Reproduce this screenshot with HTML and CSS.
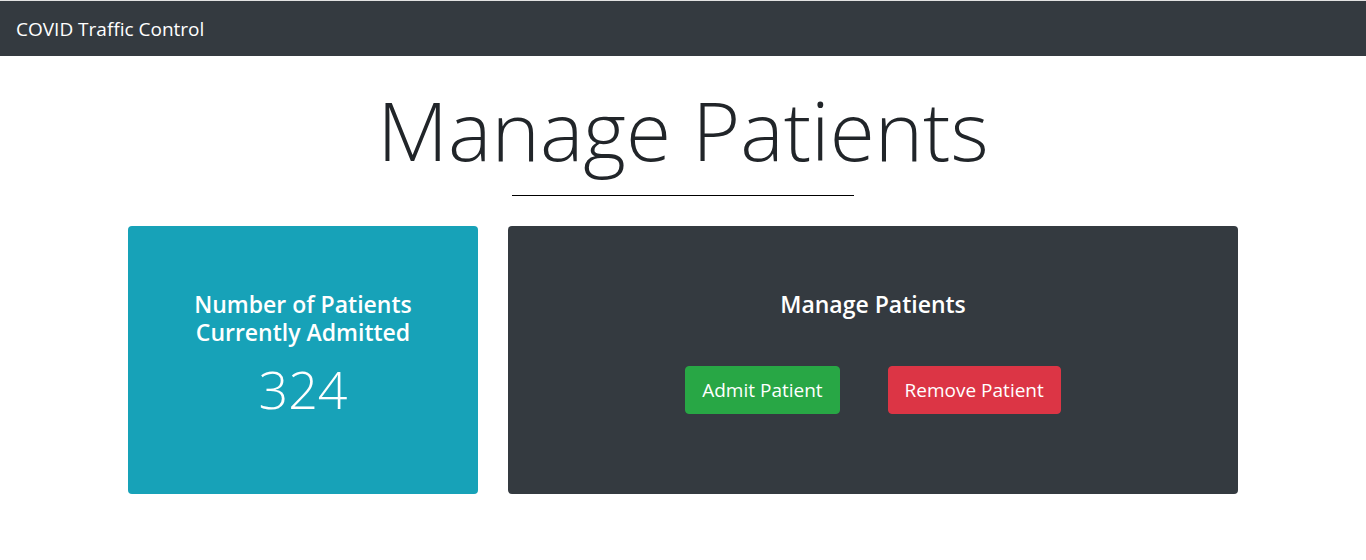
FILE: index.html
```html
<!DOCTYPE html>
<html lang="en">
<head>
<meta charset="utf-8">
<title>Manage Patients</title>
<link rel="stylesheet" href="styles.css">
</head>
<body>
<nav class="navbar">
  <a class="brand" href="#">COVID Traffic Control</a>
</nav>
<main class="page">
  <h1 class="page-title">Manage Patients</h1>
  <hr class="title-rule">
  <div class="cards">
    <section class="card card-info">
      <h4 class="card-heading">Number of Patients<br>Currently Admitted</h4>
      <div class="count">324</div>
    </section>
    <section class="card card-dark">
      <h4 class="card-heading">Manage Patients</h4>
      <div class="actions">
        <button class="btn btn-success" type="button">Admit Patient</button>
        <button class="btn btn-danger" type="button">Remove Patient</button>
      </div>
    </section>
  </div>
</main>
</body>
</html>
```
FILE: styles.css
```css
html, body {
  margin: 0;
  padding: 0;
  background: #fff;
}
body {
  font-family: "Open Sans", "Noto Sans", "Liberation Sans", sans-serif;
  color: #212529;
}
.navbar {
  height: 55px;
  border-top: 1px solid #e2e2e2;
  background: #343a40;
  display: flex;
  align-items: center;
  padding: 0 16px;
}
.brand {
  color: #fff;
  text-decoration: none;
  font-size: 19px;
  line-height: 30px;
}
.page {
  display: flex;
  flex-direction: column;
  align-items: center;
}
.page-title {
  margin: 24px 0 0;
  font-size: 82px;
  font-weight: 300;
  line-height: 1.2;
  color: #212529;
}
.title-rule {
  width: 342px;
  margin: 17px 0 0;
  border: 0;
  border-top: 1px solid #000;
}
.cards {
  width: 1110px;
  display: flex;
  gap: 30px;
  margin-top: 30px;
}
.card {
  border-radius: 4px;
  color: #fff;
  text-align: center;
  padding: 65px 20px 74px;
  box-sizing: border-box;
}
.card-info {
  width: 350px;
  background: #17a2b8;
}
.card-dark {
  flex: 1;
  background: #343a40;
}
.card-heading {
  margin: 0 0 11px;
  font-size: 23px;
  font-weight: 600;
  line-height: 1.2;
}
.count {
  font-size: 52px;
  font-weight: 300;
  line-height: 1.2;
}
.actions {
  display: flex;
  justify-content: center;
  gap: 48px;
  margin-top: 47px;
}
.btn {
  font-family: inherit;
  font-size: 19px;
  line-height: 30px;
  padding: 8px 16px;
  border: 1px solid transparent;
  border-radius: 4px;
  color: #fff;
  cursor: pointer;
}
.btn-success {
  background: #28a745;
  border-color: #28a745;
}
.btn-danger {
  background: #dc3545;
  border-color: #dc3545;
}
```
